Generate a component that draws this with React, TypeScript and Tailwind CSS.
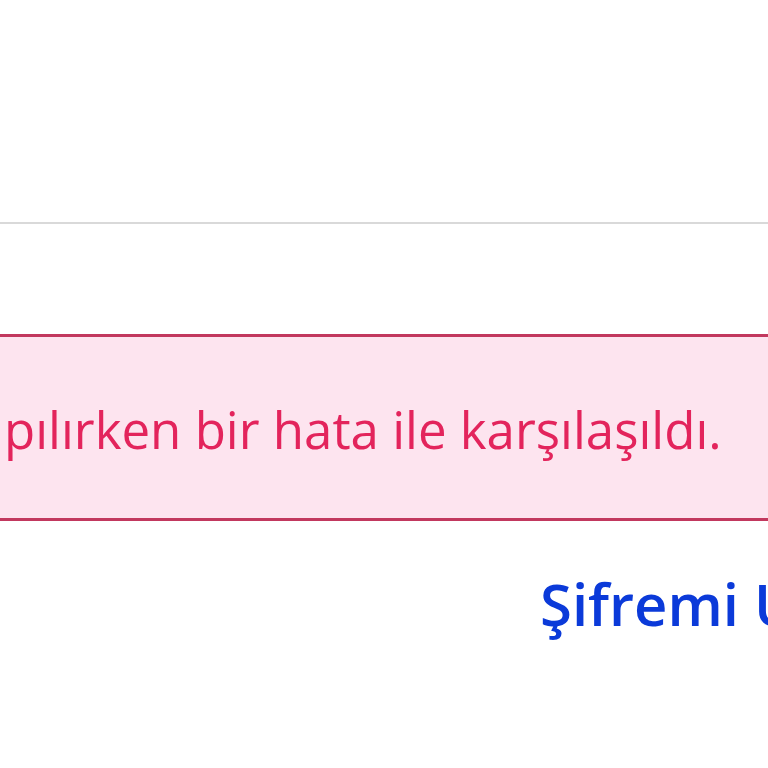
import React from 'react';

export default function App() {
  return (
    <div className="w-[768px] h-[768px] overflow-hidden bg-white" style={{ fontFamily: '"Open Sans", "Noto Sans", sans-serif' }}>
      <div className="h-[222px]" />
      <div className="h-[2px] bg-[#d9d9d9]" />
      <div className="h-[110px]" />
      <div className="h-[187px] border-y-[3px] border-[#c2385e] bg-[#fde4ef] flex items-center pl-[4px] pt-[4px]">
        <p className="whitespace-nowrap text-[51px] leading-none text-[#e3245c]">pılırken bir hata ile karşılaşıldı.</p>
      </div>
      <div className="pl-[540px] pt-[54px] whitespace-nowrap">
        <a className="text-[58px] leading-none font-semibold text-[#0b3ad9]">Şifremi Unuttum</a>
      </div>
    </div>
  );
}
